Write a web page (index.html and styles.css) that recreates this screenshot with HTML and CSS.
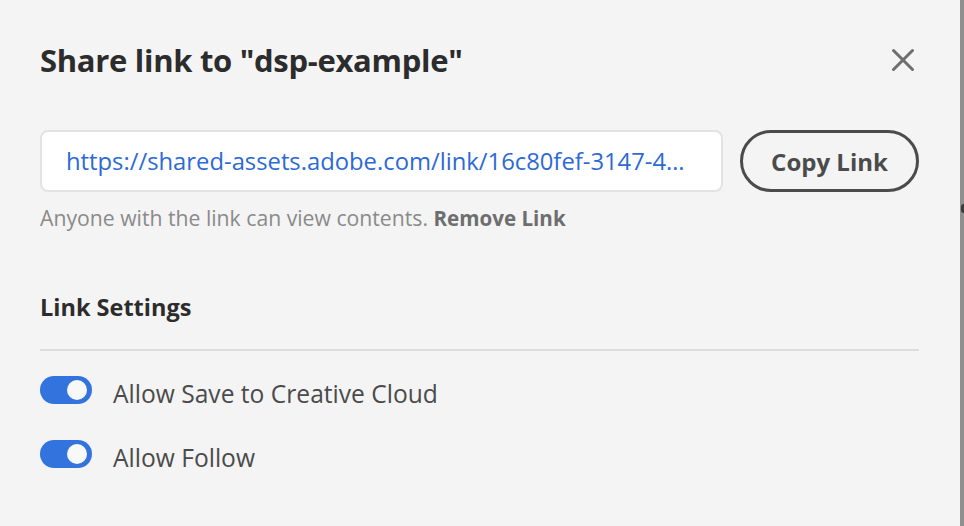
FILE: index.html
```html
<!DOCTYPE html>
<html lang="en">
<head>
<meta charset="utf-8">
<title>Share link</title>
<link rel="stylesheet" href="styles.css">
</head>
<body>
<div class="frame">
  <main class="dialog">
    <header class="dialog-header">
      <h1 class="title">Share link to "dsp-example"</h1>
      <button class="close" aria-label="Close">
        <svg width="24" height="24" viewBox="0 0 24 24"><path d="M2.5 2.5 L21.5 21.5 M21.5 2.5 L2.5 21.5" stroke="#6e6e6e" stroke-width="3" stroke-linecap="round" fill="none"/></svg>
      </button>
    </header>
    <section class="link-row">
      <div class="link-field"><span class="link-text">https://shared-assets.adobe.com/link/16c80fef-3147-4a2e-9c1b-7d3e5f0a8b12</span></div>
      <button class="copy-btn">Copy Link</button>
    </section>
    <p class="helper">Anyone with the link can view contents. <span class="remove">Remove Link</span></p>
    <h2 class="settings-title">Link Settings</h2>
    <hr class="divider">
    <ul class="settings">
      <li class="setting"><span class="toggle"><span class="knob"></span></span><span class="label">Allow Save to Creative Cloud</span></li>
      <li class="setting"><span class="toggle"><span class="knob"></span></span><span class="label">Allow Follow</span></li>
    </ul>
  </main>
  <div class="edge"><span class="edge-dot"></span></div>
</div>
</body>
</html>
```

FILE: styles.css
```css
* { box-sizing: border-box; }
html, body { margin: 0; padding: 0; }
body {
  background: #f4f4f4;
  font-family: "Open Sans", "Noto Sans", sans-serif;
  width: 964px;
  height: 526px;
  overflow: hidden;
}
.frame {
  display: flex;
  height: 526px;
}
.dialog {
  flex: 1;
  padding: 38px 41px 0 40px;
}
.edge {
  width: 4px;
  background: #8f8f8f;
  display: flex;
  flex-direction: column;
  padding-top: 204px;
}
.edge-dot {
  width: 3px;
  height: 9px;
  margin-left: 1px;
  background: #3a3a3a;
  border-radius: 3px 0 0 3px;
}
.dialog-header {
  display: flex;
  align-items: center;
  justify-content: space-between;
  height: 44px;
}
.title {
  margin: 0;
  font-size: 31px;
  font-weight: 700;
  color: #2c2c2c;
  letter-spacing: -0.3px;
  line-height: 44px;
}
.close {
  border: 0;
  background: none;
  padding: 0;
  width: 24px;
  height: 24px;
  margin-right: 4px;
  display: flex;
}
.link-row {
  display: flex;
  gap: 17px;
  margin-top: 48px;
}
.link-field {
  width: 683px;
  height: 62px;
  background: #ffffff;
  border: 2px solid #e3e3e3;
  border-radius: 8px;
  display: flex;
  align-items: center;
  padding: 0 26px 0 24px;
  overflow: hidden;
}
.link-text {
  font-size: 23.8px;
  color: #2c6ad6;
  white-space: nowrap;
  overflow: hidden;
  text-overflow: ellipsis;
  display: block;
  width: 100%;
}
.copy-btn {
  flex: 1;
  height: 62px;
  border: 3px solid #4b4b4b;
  border-radius: 31px;
  background: transparent;
  font-family: inherit;
  font-size: 24px;
  font-weight: 700;
  color: #4b4b4b;
  padding: 0;
}
.helper {
  margin: 12px 0 0;
  font-size: 21.2px;
  color: #8a8a8a;
  line-height: 28px;
}
.remove {
  font-weight: 700;
  color: #6e6e6e;
  font-size: 20.6px;
}
.settings-title {
  margin: 59px 0 0;
  font-size: 23.5px;
  font-weight: 700;
  color: #2c2c2c;
  line-height: 32px;
}
.divider {
  margin: 26px 0 0;
  border: 0;
  height: 2px;
  background: #dcdcdc;
}
.settings {
  list-style: none;
  margin: 25px 0 0;
  padding: 0;
  display: flex;
  flex-direction: column;
  gap: 36px;
}
.setting {
  display: flex;
  align-items: center;
  gap: 21px;
  height: 28px;
}
.toggle {
  width: 52px;
  height: 28px;
  border-radius: 14px;
  background: #3273de;
  display: flex;
  align-items: center;
  justify-content: flex-end;
  padding-right: 5px;
}
.knob {
  width: 20px;
  height: 20px;
  border-radius: 50%;
  background: #f8f8f8;
}
.label {
  font-size: 24.6px;
  color: #4b4b4b;
  line-height: 32px;
  margin-top: 8px;
}
```
